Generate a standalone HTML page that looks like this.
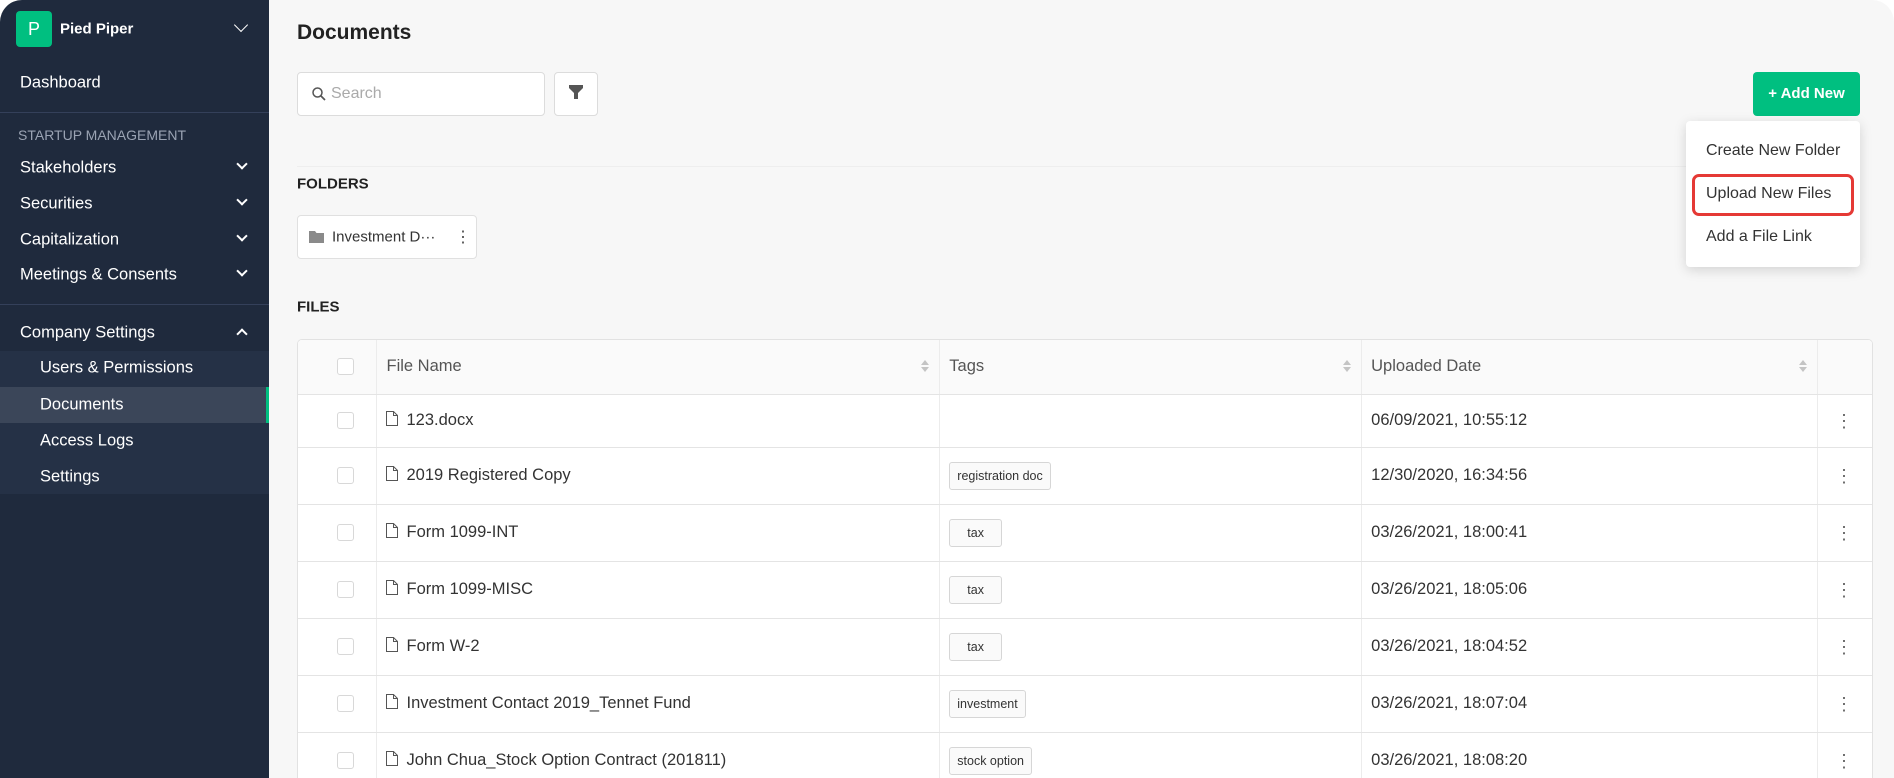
<!DOCTYPE html>
<html><head><meta charset="utf-8"><style>
*{box-sizing:border-box;margin:0;padding:0}
body{width:1894px;height:778px;overflow:hidden;background:#fff;font-family:"Liberation Sans","Noto Sans CJK KR",sans-serif;position:relative}
.app{position:absolute;left:0;top:0;width:1894px;height:778px;background:#f7f7f7;border-radius:22px 22px 0 0;overflow:hidden}
.side{position:absolute;left:0;top:0;width:269px;height:778px;background:#1f2a3d;color:#fff}
.abs{position:absolute}
.logo{left:16px;top:11px;width:36px;height:36px;background:#00bf80;border-radius:4px;color:#fff;font-size:18px;line-height:36px;text-align:center}
.nav{position:absolute;left:20px;font-size:16.5px;color:#fff;transform:translateY(-50%)}
.chev{position:absolute;left:238px;width:9px;height:9px;border-right:2px solid #fff;border-bottom:2px solid #fff;transform:rotate(45deg)}
.div{position:absolute;left:0;width:269px;height:1px;background:#34405a}
.main{position:absolute;left:269px;top:0;right:0;bottom:0}
.t{position:absolute;transform:translateY(-50%);white-space:nowrap}
.box{position:absolute;background:#fff;border:1px solid #dcdcdc;border-radius:4px}
table{position:absolute;left:297px;top:339px;width:1576px;border-collapse:collapse;background:#fff;font-size:16.5px;color:#333}
.tw{position:absolute;left:297px;top:339px;width:1576px;height:460px;border:1px solid #e2e2e2;border-radius:5px;background:#fff;overflow:hidden}
td,th{border-bottom:1px solid #e4e4e4;border-right:1px solid #ececec;text-align:left;font-weight:normal;padding:0 0 0 9px;position:relative}
th{background:#fafafa;color:#555;height:54px}
.cb{width:17px;height:17px;border:1px solid #d8d8d8;border-radius:3px;margin-left:30px;background:#fff}
.tag{display:inline-block;border:1px solid #d6d6d6;border-radius:3px;background:#fafafa;font-size:12.5px;padding:0 7px;height:28px;line-height:26px;color:#333}
.fi{display:inline-block;vertical-align:-1px;margin-right:8px}
.sort{position:absolute;right:10px;top:20px;width:8px}
.sort:before{content:"";position:absolute;left:0;top:0;border:4px solid transparent;border-bottom:5px solid #c4c4c4;border-top:0}
.sort:after{content:"";position:absolute;left:0;top:7px;border:4px solid transparent;border-top:5px solid #c4c4c4;border-bottom:0}
.kb{color:#666;font-size:18px;line-height:1;padding-left:17px}
</style></head><body><div class="app">
<div class="side">
<div class="abs logo">P</div>
<div class="t" style="left:60px;top:29px;font-size:15px;font-weight:bold;color:#fff">Pied Piper</div>
<div class="abs" style="left:236px;top:20px;width:10px;height:10px;border-right:1.5px solid #fff;border-bottom:1.5px solid #fff;transform:rotate(45deg)"></div>
<div class="nav" style="top:83px">Dashboard</div>
<div class="div" style="top:112px"></div>
<div class="nav" style="top:135px;font-size:14px;color:#9aa3b3;left:18px">STARTUP MANAGEMENT</div>
<div class="nav" style="top:168px">Stakeholders</div><div class="chev" style="top:160px;width:8px;height:8px"></div>
<div class="nav" style="top:204px">Securities</div><div class="chev" style="top:196px;width:8px;height:8px"></div>
<div class="nav" style="top:240px">Capitalization</div><div class="chev" style="top:232px;width:8px;height:8px"></div>
<div class="nav" style="top:275px">Meetings &amp; Consents</div><div class="chev" style="top:267px;width:8px;height:8px"></div>
<div class="div" style="top:304px"></div>
<div class="nav" style="top:333px">Company Settings</div><div class="chev" style="top:330px;width:8px;height:8px;transform:rotate(225deg)"></div>
<div class="abs" style="left:0;top:351px;width:269px;height:143px;background:#253146"></div>
<div class="abs" style="left:0;top:387px;width:269px;height:36px;background:#3b4659;border-right:3px solid #00bf80"></div>
<div class="nav" style="top:368px;left:40px">Users &amp; Permissions</div>
<div class="nav" style="top:405px;left:40px">Documents</div>
<div class="nav" style="top:441px;left:40px">Access Logs</div>
<div class="nav" style="top:477px;left:40px">Settings</div>
</div>
<div class="t" style="left:297px;top:33px;font-size:21px;font-weight:bold;color:#222">Documents</div>
<div class="box" style="left:297px;top:72px;width:248px;height:44px"></div>
<svg class="abs" style="left:311px;top:86px" width="16" height="16" viewBox="0 0 16 16"><circle cx="6.5" cy="6.5" r="4.5" fill="none" stroke="#555" stroke-width="1.5"/><path d="M10 10l4 4" stroke="#555" stroke-width="1.7"/></svg>
<div class="t" style="left:331px;top:94px;font-size:16px;color:#aaa">Search</div>
<div class="box" style="left:554px;top:72px;width:44px;height:44px"></div>
<svg class="abs" style="left:569px;top:85px" width="14" height="14" viewBox="0 0 14 14"><path d="M0 0h14v3L9 8v6H5V8L0 3z" fill="#555"/></svg>
<div class="abs" style="left:297px;top:166px;width:1390px;height:1px;background:#eee"></div>
<div class="abs" style="left:1753px;top:72px;width:107px;height:44px;background:#00bf80;border-radius:4px;color:#fff;font-weight:bold;font-size:15px;line-height:44px;text-align:center">+ Add New</div>
<div class="abs" style="left:1686px;top:121px;width:174px;height:146px;background:#fff;border-radius:4px;box-shadow:0 3px 12px rgba(0,0,0,.15)"></div>
<div class="t" style="left:1706px;top:151px;font-size:16px;color:#333">Create New Folder</div>
<div class="abs" style="left:1692px;top:174px;width:162px;height:42px;border:3px solid #e53935;border-radius:7px"></div>
<div class="t" style="left:1706px;top:194px;font-size:16px;color:#333">Upload New Files</div>
<div class="t" style="left:1706px;top:237px;font-size:16px;color:#333">Add a File Link</div>
<div class="t" style="left:297px;top:184px;font-size:15px;font-weight:bold;color:#222">FOLDERS</div>
<div class="box" style="left:297px;top:215px;width:180px;height:44px;border-color:#e0e0e0"></div>
<svg class="abs" style="left:309px;top:230px" width="15" height="13" viewBox="0 0 15 13"><path d="M0 1h6l1.5 2H15v10H0z" fill="#8a8a8a"/></svg>
<div class="t" style="left:332px;top:237px;font-size:15px;color:#333">Investment D···</div>
<div class="t" style="left:455px;top:237px;font-size:16px;color:#444">⋮</div>
<div class="t" style="left:297px;top:307px;font-size:15px;font-weight:bold;color:#222">FILES</div>
<div class="tw"><table style="left:0;top:0;width:1576px">
<colgroup><col style="width:79px"><col style="width:563px"><col style="width:422px"><col style="width:456px"><col style="width:56px"></colgroup>
<tr><th><div class="cb"></div></th><th>File Name<span class="sort"></span></th><th>Tags<span class="sort"></span></th><th>Uploaded Date<span class="sort"></span></th><th></th></tr>
<tr style="height:53px"><td><div class="cb"></div></td><td><svg class="fi" width="12" height="15" viewBox="0 0 12 15"><path d="M.5.5h7l4 4v10H.5z M7.5.5v4h4" fill="none" stroke="#555"/></svg>123.docx</td><td></td><td>06/09/2021, 10:55:12</td><td class="kb">⋮</td></tr>
<tr style="height:57px"><td><div class="cb"></div></td><td><svg class="fi" width="12" height="15" viewBox="0 0 12 15"><path d="M.5.5h7l4 4v10H.5z M7.5.5v4h4" fill="none" stroke="#555"/></svg>2019 Registered Copy</td><td><span class="tag">registration doc</span></td><td>12/30/2020, 16:34:56</td><td class="kb">⋮</td></tr>
<tr style="height:57px"><td><div class="cb"></div></td><td><svg class="fi" width="12" height="15" viewBox="0 0 12 15"><path d="M.5.5h7l4 4v10H.5z M7.5.5v4h4" fill="none" stroke="#555"/></svg>Form 1099-INT</td><td><span class="tag" style="padding:0 17px">tax</span></td><td>03/26/2021, 18:00:41</td><td class="kb">⋮</td></tr>
<tr style="height:57px"><td><div class="cb"></div></td><td><svg class="fi" width="12" height="15" viewBox="0 0 12 15"><path d="M.5.5h7l4 4v10H.5z M7.5.5v4h4" fill="none" stroke="#555"/></svg>Form 1099-MISC</td><td><span class="tag" style="padding:0 17px">tax</span></td><td>03/26/2021, 18:05:06</td><td class="kb">⋮</td></tr>
<tr style="height:57px"><td><div class="cb"></div></td><td><svg class="fi" width="12" height="15" viewBox="0 0 12 15"><path d="M.5.5h7l4 4v10H.5z M7.5.5v4h4" fill="none" stroke="#555"/></svg>Form W-2</td><td><span class="tag" style="padding:0 17px">tax</span></td><td>03/26/2021, 18:04:52</td><td class="kb">⋮</td></tr>
<tr style="height:57px"><td><div class="cb"></div></td><td><svg class="fi" width="12" height="15" viewBox="0 0 12 15"><path d="M.5.5h7l4 4v10H.5z M7.5.5v4h4" fill="none" stroke="#555"/></svg>Investment Contact 2019_Tennet Fund</td><td><span class="tag">investment</span></td><td>03/26/2021, 18:07:04</td><td class="kb">⋮</td></tr>
<tr style="height:57px"><td><div class="cb"></div></td><td><svg class="fi" width="12" height="15" viewBox="0 0 12 15"><path d="M.5.5h7l4 4v10H.5z M7.5.5v4h4" fill="none" stroke="#555"/></svg>John Chua_Stock Option Contract (201811)</td><td><span class="tag">stock option</span></td><td>03/26/2021, 18:08:20</td><td class="kb">⋮</td></tr>
</table></div>
</div></body></html>
